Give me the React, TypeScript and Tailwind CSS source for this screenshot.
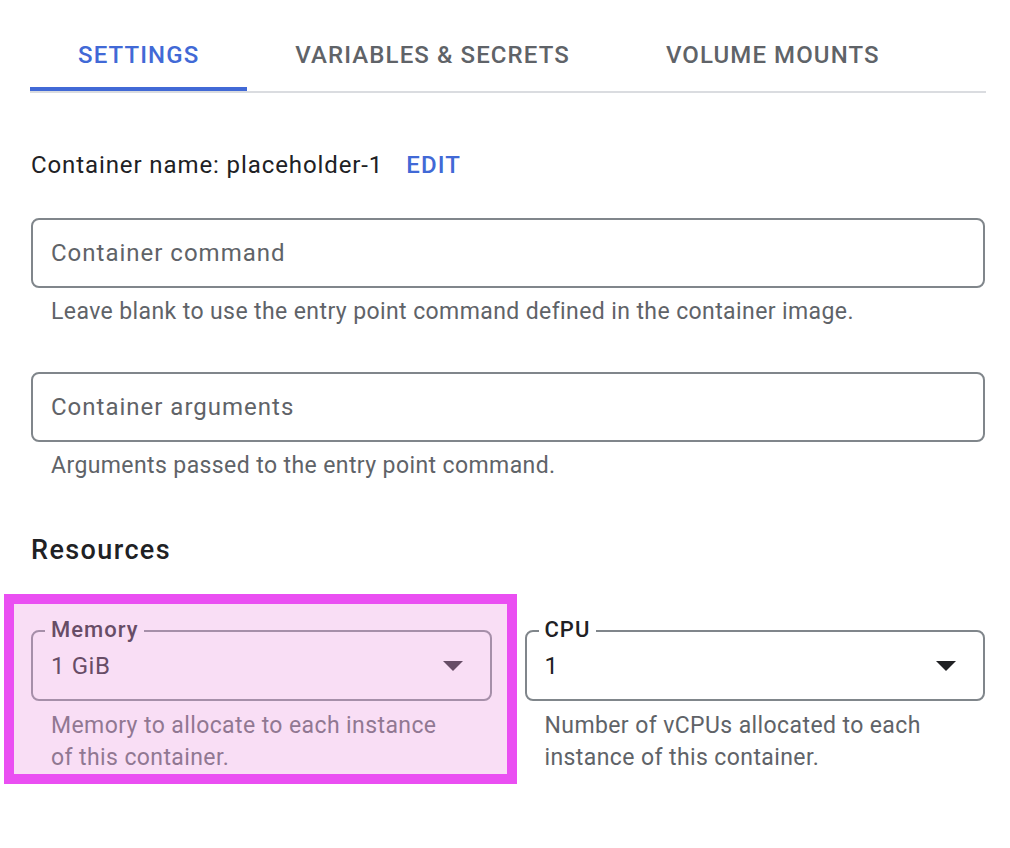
import { useState } from "react";

const tabs = ["SETTINGS", "VARIABLES & SECRETS", "VOLUME MOUNTS"];

const Caret = ({ className }: { className?: string }) => (
  <svg width="20" height="10" viewBox="0 0 20 10" className={className}>
    <path d="M0 0 L20 0 L10 10 Z" fill="currentColor" />
  </svg>
);

const TextField = ({ placeholder, hint }: { placeholder: string; hint: string }) => (
  <div>
    <div className="h-[70px] rounded-[8px] border-2 border-[#80868b] flex items-center px-[18px]">
      <span className="text-[24px] tracking-[1px] text-[#5f6368]">{placeholder}</span>
    </div>
    <p className="mt-[10px] pl-[20px] text-[23px] tracking-[0.4px] leading-[28px] text-[#5f6368]">{hint}</p>
  </div>
);

const SelectField = ({ label, value, hint }: { label: string; value: string; hint: string }) => (
  <div>
    <div className="relative h-[71px] rounded-[8px] border-2 border-[#80868b] flex items-center pl-[18px] pr-[27px]">
      <span className="absolute left-[12px] -top-[16px] bg-white px-[6px] text-[22px] tracking-[1px] leading-[28px] font-medium text-[#202124]">
        {label}
      </span>
      <span className="flex-1 text-[24px] tracking-[0.6px] text-[#202124]">{value}</span>
      <Caret className="text-[#202124]" />
    </div>
    <p className="mt-[9px] pl-[20px] pr-[40px] text-[23px] tracking-[0.4px] leading-[32px] text-[#5f6368]">{hint}</p>
  </div>
);

export default function App() {
  const [active, setActive] = useState(0);

  return (
    <div className="min-h-screen bg-white font-['Roboto',sans-serif]">
      <div className="ml-[30px] w-[956px] pb-[60px]">
        {/* Tabs */}
        <div className="flex border-b-2 border-[#dadce0]">
          {tabs.map((t, i) => (
            <button
              key={t}
              onClick={() => setActive(i)}
              className="flex flex-col items-stretch"
            >
              <span
                className={`mt-[38px] px-[48px] text-[24px] tracking-[1.1px] leading-[34px] font-medium ${
                  i === active ? "text-[#4169d6]" : "text-[#5f6368]"
                }`}
              >
                {t}
              </span>
              <span
                className={`mt-[15px] h-[4px] ${i === active ? "bg-[#4169d6]" : "bg-transparent"}`}
              />
            </button>
          ))}
        </div>

        <div className="ml-px w-[954px]">
          <div className="mt-[55px] flex items-center gap-[23px] leading-[34px]">
            <span className="text-[24px] tracking-[0.9px] text-[#202124]">Container name: placeholder-1</span>
            <button className="text-[24px] tracking-[1.1px] font-medium text-[#4169d6]">EDIT</button>
          </div>

          <div className="mt-[36px]">
            <TextField
              placeholder="Container command"
              hint="Leave blank to use the entry point command defined in the container image."
            />
          </div>
          <div className="mt-[46px]">
            <TextField placeholder="Container arguments" hint="Arguments passed to the entry point command." />
          </div>

          <h2 className="mt-[52px] text-[27px] tracking-[1.4px] leading-[36px] font-medium text-[#202124]">Resources</h2>

          <div className="mt-[62px] grid grid-cols-2 gap-[33px]">
            <div className="relative">
              <SelectField
                label="Memory"
                value="1 GiB"
                hint="Memory to allocate to each instance of this container."
              />
              {/* highlight overlay */}
              <div className="pointer-events-none absolute -left-[27px] -right-[25px] -top-[36px] -bottom-[10px] border-[10px] border-[#ea4ff2] bg-[rgba(237,160,225,0.35)]" />
            </div>
            <SelectField
              label="CPU"
              value="1"
              hint="Number of vCPUs allocated to each instance of this container."
            />
          </div>
        </div>
      </div>
    </div>
  );
}
